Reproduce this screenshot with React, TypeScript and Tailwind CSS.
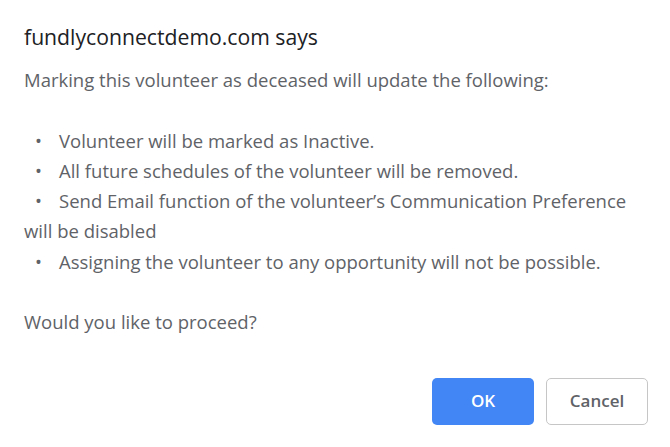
const font = { fontFamily: '"Open Sans", "Noto Sans", Arial, sans-serif' };

const bullets = [
  ["Volunteer will be marked as Inactive."],
  ["All future schedules of the volunteer will be removed."],
  ["Send Email function of the volunteer’s Communication Preference", "will be disabled"],
  ["Assigning the volunteer to any opportunity will not be possible."],
];

function Line({ children }: { children?: React.ReactNode }) {
  return <div className="h-[30.3px] whitespace-pre">{children}</div>;
}

export default function App() {
  return (
    <div className="h-[447px] w-[670px] bg-white" style={font}>
      <div className="px-6 pt-[21px]">
        <h1 className="text-[21.2px] leading-[32px] text-[#202124]">fundlyconnectdemo.com says</h1>
        <div className="mt-[12px] text-[18.5px] leading-[30.3px] text-[#5f6368]">
          <Line>Marking this volunteer as deceased will update the following:</Line>
          <Line />
          {bullets.map((b) => (
            <div key={b[0]}>
              <div className="flex h-[30.3px]">
                <span className="w-[35px] pl-[11px]">•</span>
                <span className="whitespace-pre">{b[0]}</span>
              </div>
              {b[1] && <Line>{b[1]}</Line>}
            </div>
          ))}
          <Line />
          <Line>Would you like to proceed?</Line>
        </div>
      </div>
      <div className="mt-[40px] flex justify-end gap-3 pr-[22px]">
        <button className="h-[47px] w-[102px] rounded-[5px] bg-[#4285f4] text-[17px] font-semibold text-white">
          OK
        </button>
        <button className="h-[47px] w-[102px] rounded-[5px] border border-[#c6c6c6] bg-white text-[17px] font-semibold text-[#5f6368]">
          Cancel
        </button>
      </div>
    </div>
  );
}
